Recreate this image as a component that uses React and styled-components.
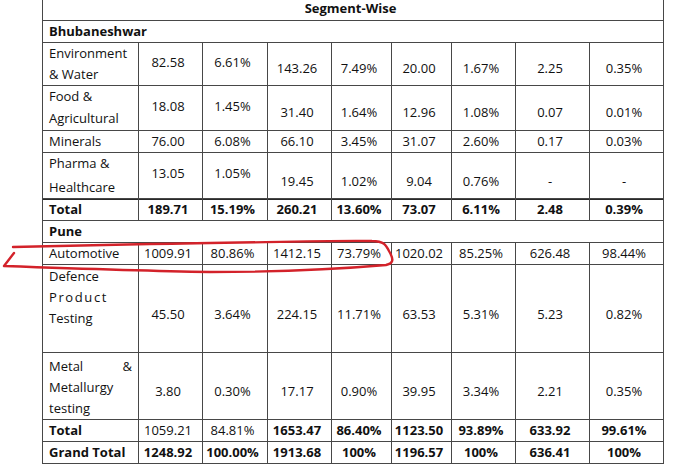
import React from "react";
import styled, { createGlobalStyle, css } from "styled-components";

const Global = createGlobalStyle`
  html, body { margin: 0; padding: 0; background: #fff; }
  body { font-family: "Open Sans", "Noto Sans", sans-serif; color: #111; }
`;

const Page = styled.div`
  position: relative;
  width: 680px;
  height: 474px;
  overflow: hidden;
  background: #fff;
`;

const Grid = styled.div`
  margin-left: 42px;
  width: 622px;
  display: grid;
  grid-template-columns: 96px 64px 65px 64px 60px 60px 64px 74px 74px;
  grid-template-rows: 21px 22px 43px 45px 22px 46px 22px 22px 22px 88px 67px 22px 22px;
  border-left: 1px solid #474747;
  box-sizing: border-box;
  font-size: 13px;
  line-height: 21px;
`;

const Cell = styled.div`
  box-sizing: border-box;
  border-right: 1px solid #474747;
  border-bottom: 1px solid #474747;
  display: flex;
  align-items: center;
  justify-content: center;
  padding-right: 5px;
  padding-top: ${(p) => Math.max(0, (p.$shift || 0) * 2)}px;
  padding-bottom: ${(p) => Math.max(0, -(p.$shift || 0) * 2)}px;
  font-weight: ${(p) => (p.$bold ? 700 : 400)};
  white-space: nowrap;
  ${(p) =>
    p.$heavyTop &&
    css`
      box-shadow: inset 0 1px 0 #2a2a2a;
    `}
`;

const SpanCell = styled(Cell)`
  grid-column: 1 / -1;
  justify-content: ${(p) => (p.$center ? "center" : "flex-start")};
  padding-left: ${(p) => (p.$center ? 0 : 6)}px;
  font-weight: 700;
`;

const LabelCell = styled(Cell)`
  flex-direction: column;
  align-items: stretch;
  justify-content: ${(p) => (p.$multi ? "flex-start" : "center")};
  gap: ${(p) => p.$gap || 0}px;
  padding-left: 6px;
  padding-right: 6px;
  padding-top: ${(p) => p.$top || 0}px;
  padding-bottom: 0;
`;

const Line = styled.span`
  display: block;
  letter-spacing: ${(p) => p.$spread || 0}px;
`;

const SplitLine = styled.span`
  display: flex;
  justify-content: space-between;
`;

const Overlay = styled.svg`
  position: absolute;
  left: 0;
  top: 0;
  width: 680px;
  height: 474px;
  pointer-events: none;
`;

const bhubaneshwar = [
  {
    label: ["Environment", "& Water"],
    vals: ["82.58", "6.61%", "143.26", "7.49%", "20.00", "1.67%", "2.25", "0.35%"],
    shifts: [-1.5, -1.5, 4.5, 4.5, 4.5, 4.5, 4.5, 4.5],
  },
  {
    label: ["Food &", "Agricultural"],
    gap: 1,
    vals: ["18.08", "1.45%", "31.40", "1.64%", "12.96", "1.08%", "0.07", "0.01%"],
    shifts: [-1.5, -1.5, 4.5, 4.5, 4.5, 4.5, 4.5, 4.5],
  },
  {
    label: ["Minerals"],
    vals: ["76.00", "6.08%", "66.10", "3.45%", "31.07", "2.60%", "0.17", "0.03%"],
  },
  {
    label: ["Pharma &", "Healthcare"],
    gap: 3,
    vals: ["13.05", "1.05%", "19.45", "1.02%", "9.04", "0.76%", "-", "-"],
    shifts: [-2, -2, 6, 6, 6, 6, 6, 6],
  },
];

const Row = ({ label, vals, shifts, bold, boldVals, heavyTop, gap, top, children }) => (
  <>
    <LabelCell
      $multi={!!children || label.length > 1}
      $bold={bold}
      $heavyTop={heavyTop}
      $gap={gap}
      $top={top}
    >
      {children || label.map((l) => <Line key={l}>{l}</Line>)}
    </LabelCell>
    {vals.map((v, i) => (
      <Cell
        key={i}
        $shift={shifts ? shifts[i] : 0}
        $bold={boldVals ? boldVals[i] : bold}
        $heavyTop={heavyTop}
      >
        {v}
      </Cell>
    ))}
  </>
);

export default function App() {
  return (
    <Page>
      <Global />
      <Grid>
        <SpanCell $center $shift={-1.5}>Segment-Wise</SpanCell>
        <SpanCell>Bhubaneshwar</SpanCell>
        {bhubaneshwar.map((r) => (
          <Row key={r.label[0]} {...r} />
        ))}
        <Row
          label={["Total"]}
          bold
          heavyTop
          vals={["189.71", "15.19%", "260.21", "13.60%", "73.07", "6.11%", "2.48", "0.39%"]}
        />
        <SpanCell>Pune</SpanCell>
        <Row
          label={["Automotive"]}
          vals={["1009.91", "80.86%", "1412.15", "73.79%", "1020.02", "85.25%", "626.48", "98.44%"]}
        />
        <Row
          label={[]}
          top={1}
          vals={["45.50", "3.64%", "224.15", "11.71%", "63.53", "5.31%", "5.23", "0.82%"]}
          shifts={[6, 6, 6, 6, 6, 6, 6, 6]}
        >
          <Line>Defence</Line>
          <Line $spread={1.6}>Product</Line>
          <Line>Testing</Line>
        </Row>
        <Row
          label={[]}
          top={3}
          vals={["3.80", "0.30%", "17.17", "0.90%", "39.95", "3.34%", "2.21", "0.35%"]}
          shifts={[5.5, 5.5, 5.5, 5.5, 5.5, 5.5, 5.5, 5.5]}
        >
          <SplitLine>
            <span>Metal</span>
            <span>&amp;</span>
          </SplitLine>
          <Line>Metallurgy</Line>
          <Line>testing</Line>
        </Row>
        <Row
          label={["Total"]}
          bold
          boldVals={[false, false, true, true, true, true, true, true]}
          vals={["1059.21", "84.81%", "1653.47", "86.40%", "1123.50", "93.89%", "633.92", "99.61%"]}
        />
        <Row
          label={["Grand Total"]}
          bold
          vals={["1248.92", "100.00%", "1913.68", "100%", "1196.57", "100%", "636.41", "100%"]}
        />
      </Grid>
      <Overlay viewBox="0 0 680 474">
        <path
          d="M 14 253 L 4 266 C 60 268, 150 271, 210 272 C 280 272, 340 269, 386 265 C 395 263, 393 258, 389 251 C 386 245, 384 241, 372 241 C 330 240, 250 243, 150 244 C 90 245, 40 246, 13 247"
          fill="none"
          stroke="#d3222a"
          strokeWidth="2.4"
          strokeLinecap="round"
          strokeLinejoin="round"
        />
      </Overlay>
    </Page>
  );
}
